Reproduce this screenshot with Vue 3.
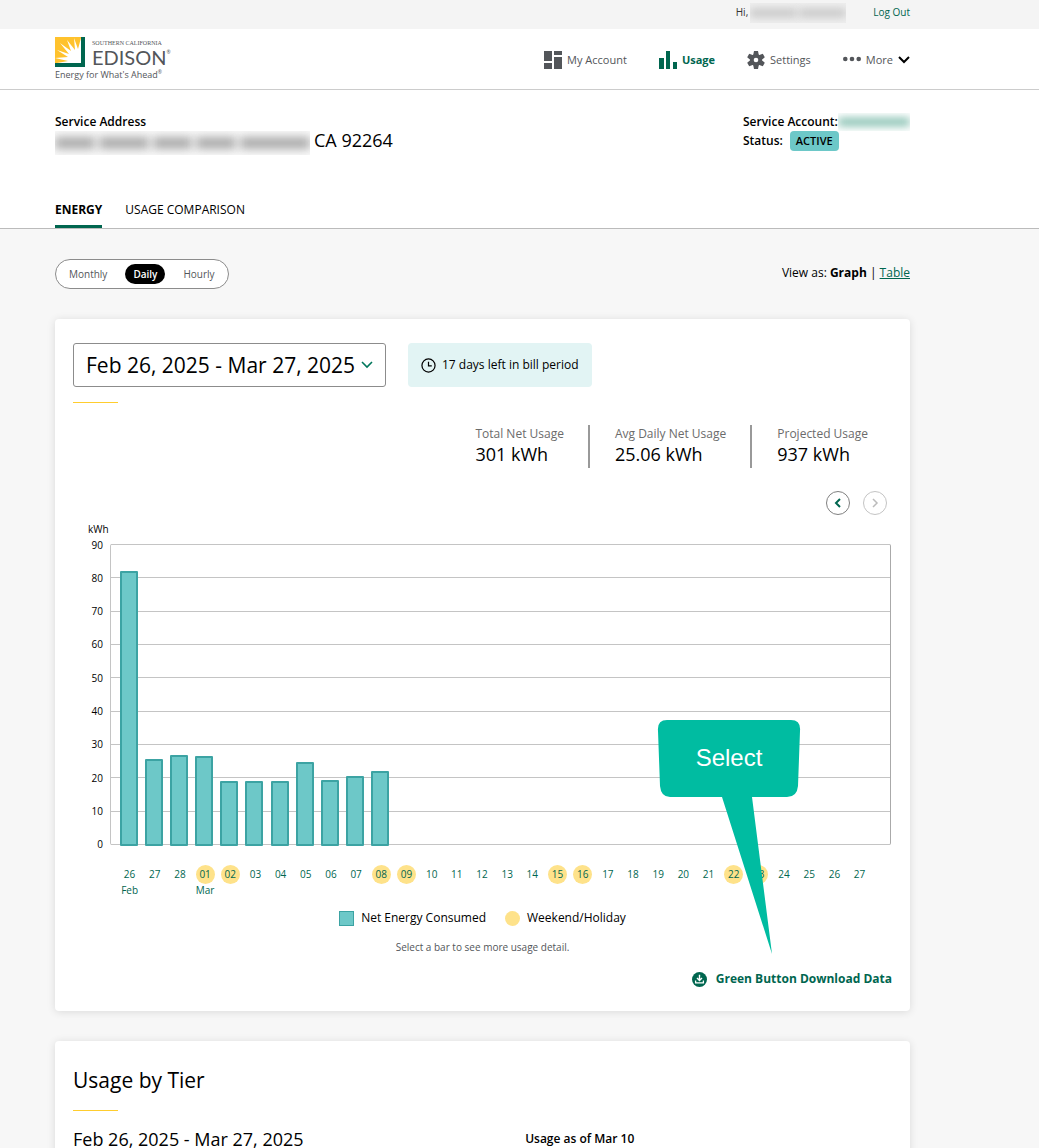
<script setup>
import { ref } from 'vue'

const ranges = ['Feb 26, 2025 - Mar 27, 2025']
const range = ref(ranges[0])

const periods = ['Monthly', 'Daily', 'Hourly']
const period = ref('Daily')

const stats = [
  { label: 'Total Net Usage', value: '301 kWh' },
  { label: 'Avg Daily Net Usage', value: '25.06 kWh' },
  { label: 'Projected Usage', value: '937 kWh' },
]

const axisMax = 90
const ticks = [90, 80, 70, 60, 50, 40, 30, 20, 10, 0]

const usage = [82, 25.9, 27.1, 26.9, 19.5, 19.4, 19.4, 24.9, 19.7, 20.8, 22.4]
const weekend = ['01', '02', '08', '09', '15', '16', '22', '23']

const days = Array.from({ length: 30 }, (_, i) => {
  const day = i < 3 ? String(26 + i) : String(i - 2).padStart(2, '0')
  return {
    day,
    month: i === 0 ? 'Feb' : i === 3 ? 'Mar' : '',
    weekend: i >= 3 && weekend.includes(day),
    kwh: usage[i] ?? null,
  }
})
</script>

<template>
  <div class="page">
    <div class="topbar">
      <div class="wrap topbar-row">
        <span class="hello">Hi,</span>
        <span class="redacted name"><i></i><i></i></span>
        <a href="#" class="logout">Log Out</a>
      </div>
    </div>

    <header class="header">
      <div class="wrap header-row">
        <a href="#" class="brand">
          <span class="brand-top">
            <svg class="mark" viewBox="0 0 30 30" width="30" height="30">
              <rect width="30" height="30" fill="#00664f" />
              <rect width="26" height="26" fill="#ffc22d" />
              <path
                d="M26 26H2l11-2L0 21l13-1L2 13l12 4L5 6l11 8L12 3l8 10L19 1l4 11 3-11z"
                fill="#fff"
              />
              <path d="M26 26H15c0-7 5-11 11-11z" fill="#fff" />
            </svg>
            <span class="brand-text">
              <span class="brand-small">SOUTHERN CALIFORNIA</span>
              <span class="brand-big">EDISON<small>®</small></span>
            </span>
          </span>
          <span class="tagline">Energy for What's Ahead<small>®</small></span>
        </a>

        <nav class="nav">
          <a href="#">
            <svg viewBox="0 0 18 18" width="18" height="18" fill="#53565a">
              <path d="M0 0h8v10H0zM10 0h8v4h-8zM0 12h8v6H0zM10 6h8v12h-8z" />
            </svg>
            My Account
          </a>
          <a href="#" class="current">
            <svg viewBox="0 0 18 18" width="18" height="18" fill="#00664f">
              <path d="M0 7h5v11H0zM7 0h4v18H7zM14 11h4v7h-4z" />
            </svg>
            Usage
          </a>
          <a href="#">
            <svg viewBox="0 0 18 18" width="18" height="18">
              <g fill="#53565a">
                <circle cx="9" cy="9" r="6" />
                <path d="M7 0h4l1 5H6zM7 18h4l1-5H6z" />
                <path d="M7 0h4l1 5H6zM7 18h4l1-5H6z" transform="rotate(60 9 9)" />
                <path d="M7 0h4l1 5H6zM7 18h4l1-5H6z" transform="rotate(120 9 9)" />
              </g>
              <circle cx="9" cy="9" r="2.3" fill="#fff" />
            </svg>
            Settings
          </a>
          <a href="#">
            <svg viewBox="0 0 18 18" width="18" height="18" fill="#53565a">
              <circle cx="2.3" cy="8" r="2.3" />
              <circle cx="9" cy="8" r="2.3" />
              <circle cx="15.7" cy="8" r="2.3" />
            </svg>
            More
            <svg viewBox="0 0 12 8" width="12" height="8" fill="none" stroke="#000" stroke-width="2">
              <path d="M1 1l5 5 5-5" />
            </svg>
          </a>
        </nav>
      </div>
    </header>

    <section class="account">
      <div class="wrap">
        <div class="account-row">
          <div>
            <div class="label">Service Address</div>
            <div class="address">
              <span class="redacted street"><i></i><i></i><i></i><i></i><i></i></span>
              <span>CA 92264</span>
            </div>
          </div>
          <div class="service">
            <div class="label service-line">
              Service Account:<span class="redacted number"><i></i></span>
            </div>
            <div class="label status">Status: <span class="badge">ACTIVE</span></div>
          </div>
        </div>
        <nav class="tabs">
          <a href="#" class="on">ENERGY</a>
          <a href="#">USAGE COMPARISON</a>
        </nav>
      </div>
    </section>

    <main class="wrap main">
      <div class="controls">
        <div class="toggle">
          <button
            v-for="p in periods"
            :key="p"
            type="button"
            :class="{ on: p === period }"
            @click="period = p"
          >
            {{ p }}
          </button>
        </div>
        <div class="view">View as: <b>Graph</b> | <a href="#">Table</a></div>
      </div>

      <section class="card usage">
        <div class="pick-row">
          <div class="pick">
            <select v-model="range" aria-label="Bill period">
              <option v-for="r in ranges" :key="r">{{ r }}</option>
            </select>
            <svg viewBox="0 0 12 8" width="12" height="8" fill="none" stroke="#00775c" stroke-width="1.6">
              <path d="M1 1l5 5 5-5" />
            </svg>
          </div>
          <div class="notice">
            <svg viewBox="0 0 16 16" width="15" height="15" fill="none" stroke="#000" stroke-width="1.3">
              <circle cx="8" cy="8" r="7" />
              <path d="M8 4v4.5h3.5" />
            </svg>
            17 days left in bill period
          </div>
        </div>
        <div class="accent"></div>

        <dl class="stats">
          <div v-for="s in stats" :key="s.label">
            <dt>{{ s.label }}</dt>
            <dd>{{ s.value }}</dd>
          </div>
        </dl>

        <div class="pager">
          <button type="button" aria-label="Previous">
            <svg viewBox="0 0 8 10" width="8" height="10" fill="none" stroke="#00664f" stroke-width="2">
              <path d="M6 1L2 5l4 4" />
            </svg>
          </button>
          <button type="button" aria-label="Next" disabled>
            <svg viewBox="0 0 8 10" width="8" height="10" fill="none" stroke="#bbb" stroke-width="1.5">
              <path d="M2 1l4 4-4 4" />
            </svg>
          </button>
        </div>

        <div class="unit">kWh</div>
        <div class="chart">
          <div class="axis">
            <span v-for="t in ticks" :key="t"><em>{{ t }}</em></span>
          </div>
          <div class="plot">
            <div class="grid"><hr v-for="t in ticks" :key="t" /></div>
            <div class="bars">
              <div v-for="(d, i) in days" :key="i" class="slot">
                <button
                  v-if="d.kwh"
                  type="button"
                  class="bar"
                  :aria-label="d.day"
                  :style="{ height: (d.kwh / axisMax) * 100 + '%' }"
                ></button>
              </div>
            </div>
          </div>
        </div>
        <div class="days">
          <div v-for="(d, i) in days" :key="i" class="slot">
            <span class="day" :class="{ weekend: d.weekend }">{{ d.day }}</span>
            <span class="month">{{ d.month }}</span>
          </div>
        </div>

        <div class="legend">
          <span><i class="square"></i>Net Energy Consumed</span>
          <span><i class="dot"></i>Weekend/Holiday</span>
        </div>
        <p class="hint">Select a bar to see more usage detail.</p>
        <a href="#" class="download">
          <svg viewBox="0 0 15 15" width="15" height="15">
            <circle cx="7.5" cy="7.5" r="7.5" fill="#00664f" />
            <path d="M7.5 2.8v5M5 6l2.5 2.5L10 6" fill="none" stroke="#fff" stroke-width="1.4" />
            <path d="M3.6 8.5v2.4h7.8V8.5" fill="none" stroke="#fff" stroke-width="1.3" />
          </svg>
          Green Button Download Data
        </a>

        <div class="callout">
          <svg viewBox="0 0 144 234" width="144" height="234" fill="#00bca1">
            <path
              d="M10 0H134Q144 0 143 11L141 66Q140 77 130 77H95L115 234 65 77H13Q4 77 3 66L1 11Q0 0 10 0z"
            />
          </svg>
          <span>Select</span>
        </div>
      </section>

      <section class="card tier">
        <h2>Usage by Tier</h2>
        <div class="accent"></div>
        <div class="tier-row">
          <span class="tier-range">Feb 26, 2025 - Mar 27, 2025</span>
          <span class="tier-as-of">Usage as of Mar 10</span>
        </div>
      </section>
    </main>
  </div>
</template>

<style>
body {
  margin: 0;
  background: #f7f7f7;
}
</style>

<style scoped>
.page {
  font-family: 'Open Sans', 'Noto Sans', sans-serif;
  font-size: 12px;
  line-height: 18px;
  color: #000;
}
.page * {
  box-sizing: border-box;
}
button,
select {
  font-family: inherit;
  margin: 0;
  cursor: pointer;
}
a {
  color: #00664f;
  text-decoration: none;
}
svg {
  display: block;
  flex: none;
}
.wrap {
  padding: 0 129px 0 55px;
}

.redacted {
  display: flex;
  align-items: center;
  overflow: hidden;
}
.redacted i {
  height: 8px;
  background: #999;
  filter: blur(4px);
}

.topbar {
  background: #f4f4f4;
  height: 29px;
}
.topbar-row {
  display: flex;
  justify-content: flex-end;
  font-size: 10px;
  line-height: 24px;
}
.hello {
  color: #333;
}
.name {
  width: 96px;
  height: 20px;
  margin: 3px 27px 0 2px;
  gap: 2px;
  background: #efefef;
}
.name i {
  flex: 1;
  background: #c4c4c4;
}

.header {
  background: #fff;
  border-bottom: 1px solid #ccc;
}
.header-row {
  display: flex;
  justify-content: space-between;
  align-items: center;
  height: 60px;
  padding-top: 2px;
}
.brand {
  color: #53565a;
  white-space: nowrap;
}
.brand-top {
  display: flex;
  gap: 7px;
}
.brand-text {
  display: flex;
  flex-direction: column;
  justify-content: flex-end;
}
.brand-small {
  font-family: 'Liberation Serif', serif;
  font-size: 6px;
  line-height: 8px;
}
.brand-big {
  display: flex;
  font-family: Lato, sans-serif;
  font-size: 20px;
  line-height: 20px;
}
.brand small {
  font-size: 5px;
  line-height: 10px;
}
.tagline {
  display: flex;
  font-size: 9px;
  line-height: 16px;
}
.nav {
  display: flex;
  gap: 32px;
}
.nav a {
  display: flex;
  align-items: center;
  gap: 5px;
  font-size: 11px;
  color: #53565a;
}
.nav a.current {
  color: #00664f;
  font-weight: 700;
}

.account {
  background: #fff;
  border-bottom: 1px solid #bbb;
}
.account-row {
  display: flex;
  justify-content: space-between;
  height: 96px;
  padding-top: 23px;
}
.label {
  font-weight: 600;
}
.address {
  display: flex;
  gap: 4px;
  font-size: 18px;
}
.street {
  width: 255px;
  height: 24px;
  gap: 4px;
  background: #fafafa;
}
.street i {
  height: 12px;
  flex: 4;
  background: #aaa;
  filter: blur(5px);
}
.street i:nth-child(2) {
  flex: 5;
}
.street i:nth-child(5) {
  flex: 7;
}
.service {
  width: 167px;
}
.service-line {
  display: flex;
}
.status {
  display: flex;
  align-items: center;
}
.number {
  flex: 1;
}
.number i {
  flex: 1;
  background: #80bdad;
}
.badge {
  margin-left: 7px;
  padding: 0 6px;
  border-radius: 4px;
  background: #6dc8c8;
  font-size: 11px;
  line-height: 20px;
}
.tabs {
  display: flex;
  gap: 23px;
}
.tabs a {
  height: 42px;
  padding-top: 15px;
  color: #000;
}
.tabs a.on {
  font-weight: 700;
  border-bottom: 3px solid #00664f;
}

.main {
  padding-bottom: 24px;
}
.controls {
  display: flex;
  justify-content: space-between;
  margin: 30px 0;
}
.toggle {
  display: flex;
  align-items: center;
  gap: 10px;
  height: 30px;
  padding: 0 5px;
  border: 1px solid #8c8c8c;
  border-radius: 15px;
  background: #fff;
}
.toggle button {
  height: 20px;
  padding: 0 8px;
  border: 0;
  border-radius: 10px;
  background: none;
  font-size: 10px;
  color: #53565a;
}
.toggle .on {
  background: #000;
  color: #fff;
  font-weight: 600;
}
.view {
  line-height: 28px;
}
.view a {
  text-decoration: underline;
}

.card {
  position: relative;
  padding: 24px 18px;
  background: #fff;
  border-radius: 4px;
  box-shadow: 0 1px 8px rgba(0, 0, 0, 0.12);
}
.usage {
  padding-bottom: 23px;
}
.pick-row {
  display: flex;
  gap: 22px;
}
.pick {
  position: relative;
}
.pick select {
  appearance: none;
  height: 44px;
  padding: 0 29px 0 12px;
  border: 1px solid #8c8c8c;
  border-radius: 3px;
  background: #fff;
  font-size: 21px;
  color: #000;
}
.pick svg {
  position: absolute;
  right: 13px;
  top: 18px;
  pointer-events: none;
}
.notice {
  display: flex;
  align-items: center;
  gap: 6px;
  padding: 0 13px;
  border-radius: 4px;
  background: #e2f4f4;
}
.accent {
  width: 45px;
  height: 1px;
  margin-top: 15px;
  background: #ffcd2e;
}
.stats {
  display: flex;
  justify-content: flex-end;
  margin: 22px 0 0;
}
.stats div {
  height: 43px;
  padding: 0 24px 0 25px;
}
.stats div + div {
  border-left: 2px solid #999;
}
.stats dt {
  color: #6b6b6b;
}
.stats dd {
  margin: 0;
  font-size: 18px;
  line-height: 22px;
}
.pager {
  display: flex;
  justify-content: flex-end;
  gap: 13px;
  margin: 23px 5px 0 0;
}
.pager button {
  display: flex;
  align-items: center;
  justify-content: center;
  width: 24px;
  height: 24px;
  padding: 0;
  border: 1px solid #808080;
  border-radius: 50%;
  background: #fff;
}
.pager button:disabled {
  border-color: #c4c4c4;
}

.unit {
  margin: 6px 0 0 15px;
  font-size: 10px;
  line-height: 16px;
}
.chart {
  display: flex;
  height: 301px;
  margin-top: 7px;
}
.axis {
  display: flex;
  flex-direction: column;
  justify-content: space-between;
  width: 37px;
  padding-right: 7px;
  font-size: 10px;
}
.axis span {
  display: flex;
  align-items: center;
  justify-content: flex-end;
  height: 1px;
}
.axis em {
  font-style: normal;
}
.plot {
  position: relative;
  flex: 1;
  margin-right: 1px;
  border: solid #aaa;
  border-width: 0 1px;
  border-left-color: #c4c4c4;
  border-radius: 2px;
}
.grid {
  display: flex;
  flex-direction: column;
  justify-content: space-between;
  height: 100%;
}
.grid hr {
  width: 100%;
  height: 1px;
  margin: 0;
  border: 0;
  background: #c4c4c4;
}
.bars {
  position: absolute;
  inset: 0 19px -1px 5px;
  display: flex;
}
.slot {
  flex: 1 1 0;
  display: flex;
  flex-direction: column;
  align-items: center;
  justify-content: flex-end;
  min-width: 0;
}
.bar {
  width: 18px;
  flex: none;
  padding: 0;
  border: 2px solid #3ca3a3;
  border-radius: 1px;
  outline: 0;
  background: #6dc8c8;
}
.days {
  display: flex;
  margin: 20px 20px 0 44px;
  font-size: 10px;
  color: #00664f;
}
.day {
  width: 19px;
  height: 19px;
  border-radius: 50%;
  line-height: 19px;
  text-align: center;
}
.day.weekend {
  background: #fee28a;
}
.month {
  height: 12px;
  line-height: 12px;
}
.legend {
  display: flex;
  justify-content: center;
  gap: 19px;
  margin-top: 13px;
}
.legend span {
  display: flex;
  align-items: center;
  gap: 7px;
}
.legend i {
  width: 15px;
  height: 15px;
}
.square {
  border: 1px solid #3ca3a3;
  background: #6dc8c8;
}
.dot {
  border-radius: 50%;
  background: #fee28a;
}
.hint {
  margin: 11px 0 0;
  font-size: 10px;
  text-align: center;
  color: #53565a;
}
.download {
  display: flex;
  align-items: center;
  gap: 9px;
  width: fit-content;
  margin: 14px 0 0 auto;
  font-weight: 700;
}
.callout {
  position: absolute;
  right: 109px;
  bottom: 57px;
  pointer-events: none;
}
.callout span {
  position: absolute;
  inset: 0 0 auto;
  font: 24px/76px 'Liberation Sans', Arial, sans-serif;
  text-align: center;
  color: #fff;
}

.tier {
  margin-top: 30px;
}
.tier h2 {
  margin: 0;
  font-size: 21px;
  line-height: 30px;
  font-weight: 400;
}
.tier-row {
  display: grid;
  grid-template-columns: 53fr 43fr;
  align-items: center;
  margin-top: 15px;
  line-height: 26px;
}
.tier-range {
  font-size: 18px;
}
.tier-as-of {
  font-weight: 600;
}
</style>
